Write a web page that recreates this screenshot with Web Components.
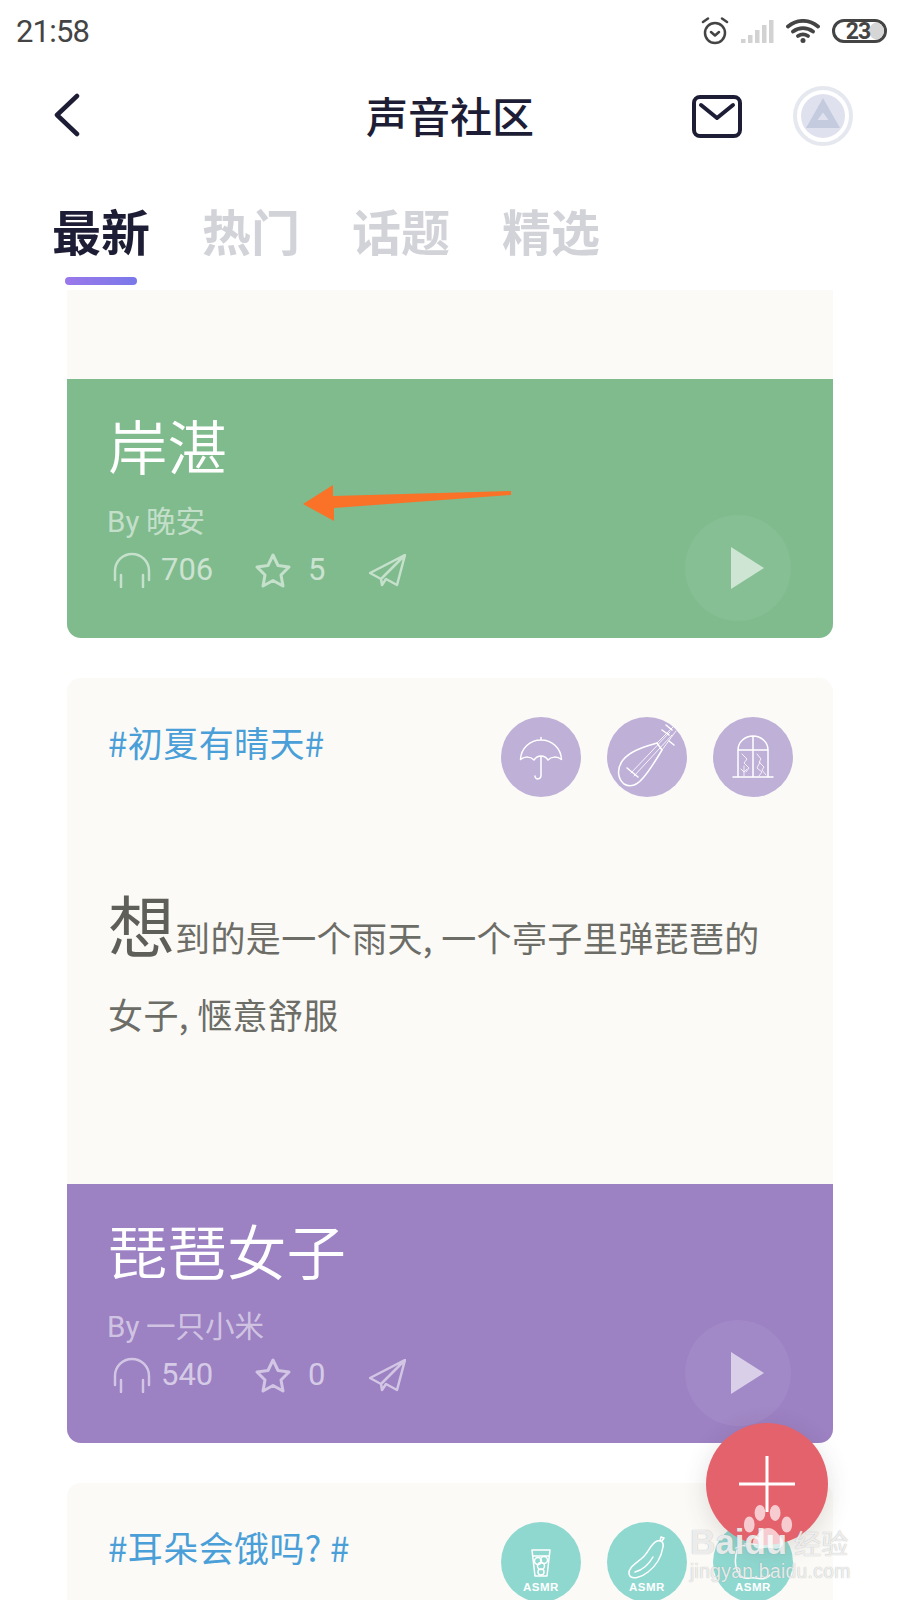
<!DOCTYPE html>
<html lang="zh">
<head>
<meta charset="utf-8">
<title>声音社区</title>
<style>
  html, body { margin: 0; padding: 0; background: #fff; }
  body { font-family: "Noto Sans CJK SC", "Noto Sans", sans-serif; }
  #page { position: relative; width: 900px; height: 1600px; overflow: hidden; }
</style>
</head>
<body>
<div id="page">
  <status-bar time="21:58" battery="23"></status-bar>
  <app-header title="声音社区"></app-header>
  <tab-bar tabs="最新,热门,话题,精选"></tab-bar>
  <card-list>
    <voice-card color="#7fbb8d" name="岸湛" by="晚安" listens="706" stars="5" style="--body-height: 89px"></voice-card>
    <voice-card color="#9c81c3" name="琵琶女子" by="一只小米" listens="540" stars="0" style="--body-height: 506px">
      <topic-head tag="#初夏有晴天#" color="#bfb0d8" icons="umbrella,pipa,window"></topic-head>
      <p-text first="想">到的是一个雨天, 一个亭子里弹琵琶的女子, 惬意舒服</p-text>
    </voice-card>
    <voice-card style="--body-height: 506px">
      <topic-head tag="#耳朵会饿吗? #" color="#8fd8d0" icons="glass,cucumber,ear"></topic-head>
    </voice-card>
  </card-list>
  <note-arrow></note-arrow>
  <add-button></add-button>
  <baidu-mark></baidu-mark>
</div>

<script>
const ASMR = `<text x="40" y="69" text-anchor="middle" font-family="Liberation Sans, sans-serif" font-size="11.500" font-weight="700" letter-spacing=".5" fill="#fff" stroke="none">ASMR</text>`;

const ICONS = {
  umbrella: `<path d="M19.500 42.500C20 31 29 23 40 23s20 8 20.500 19.500C56 39 50 39.500 47 43c-2-3-4.500-4-7-4s-5 1-7 4c-3-3.500-9-4-13.500-.5zM40 20.500V23M40 39v19c0 5-6 5-6 1"/>`,
  pipa: `<path d="M50 26C38 30 24 33 16 43 9 52 11 62 17 67c7 4 14 0 19-6 7-8 13-18 19-28zM20 51l11 9M55 13l7 5M59 8l6 5M62 24l5 4"/><path stroke-width="1" opacity=".85" d="M50 26 66 10M55 33 69 14M24 56 63 15M27 59 65 18"/>`,
  window: `<path d="M25 60V33C25 25 32 19 40 19s15 6 15 14v27M40 19V60M25 33H55M20 60H60"/><path stroke-width="1" opacity=".8" d="M29 37l5 5-3 4 5 5-3 4M31 49v10M28 52l3 3 3-3M44 37l4 5-2 3 5 5-2 3 4 5M47 45l-3 6 5 4-3 4"/>`,
  glass: `<path d="M31 28H49L46 54H34zM32 34H48"/><circle cx="37" cy="39" r="3.500"/><circle cx="43" cy="38" r="3.500"/><circle cx="40" cy="44" r="3.500"/><circle cx="40" cy="50" r="3"/>${ASMR}`,
  cucumber: `<path d="M22 52c-1-6 6-10 12-15 8-6 9-15 16-18 4-1 7 1 6 6-2 12-7 19-15 25-6 5-17 9-19 2zM53 19l1-4 3 1-2 3M28 50c8-2 14-8 18-15"/>${ASMR}`,
  ear: `<path d="M23 26c4-3 9-3 12-1M24 28c-3 10-2 22 5 27 5 3 9 0 13 1 5 1 11 2 15-3M32 22h12"/>${ASMR}`
};

class StatusBar extends HTMLElement {
  constructor() {
    super();
    this.attachShadow({ mode: 'open' });
  }
  connectedCallback() {
    this.shadowRoot.innerHTML = `
      <style>
        :host { display: flex; align-items: center; height: 62px; padding: 0 13px 0 16px; color: #444; }
        .time { font: 400 31px Roboto, sans-serif; letter-spacing: -.8px; }
        .icons { margin-left: auto; display: flex; align-items: center; gap: 12px; }
        svg { display: block; }
        .battery { position: relative; box-sizing: border-box; width: 55px; height: 24px; border: 3px solid #444; border-radius: 12px; display: flex; align-items: center; justify-content: center; overflow: hidden; }
        .battery i { position: absolute; right: 0; top: 0; bottom: 0; width: 15px; border-radius: 9px 0 0 9px; background: #d6d6d6; }
        .battery span { position: relative; font: 700 23px/1 Roboto, sans-serif; letter-spacing: -1px; color: #444; margin-left: -3px; }
      </style>
      <span class="time">${this.getAttribute('time')}</span>
      <div class="icons">
        <svg width="28" height="28" viewBox="0 0 28 28" fill="none" stroke="#444" stroke-width="2.500" stroke-linecap="round" stroke-linejoin="round">
          <circle cx="14" cy="16" r="10"/><path d="M10 15l4 3.500 4-3.500M2 5l5-3.500M26 5l-5-3.500"/>
        </svg>
        <svg width="33" height="24" viewBox="0 0 33 24" fill="#d2d2d2">
          <rect x="0" y="20" width="4.500" height="4"/><rect x="7" y="16" width="4.500" height="8"/><rect x="14" y="11" width="4.500" height="13"/><rect x="21" y="6" width="4.500" height="18"/><rect x="28" y="1" width="4.500" height="23"/>
        </svg>
        <svg width="34" height="24" viewBox="0 0 34 24" fill="none" stroke="#444" stroke-width="3.800" stroke-linecap="round">
          <path d="M2 7.500C11 0 23 0 32 7.500M7 12.500c6-4.500 14-4.500 20 0M12 17c3-2 7-2 10 0"/><circle cx="17" cy="21.500" r="2.500" fill="#444" stroke="none"/>
        </svg>
        <div class="battery"><i></i><span>${this.getAttribute('battery')}</span></div>
      </div>
    `;
  }
}

class AppHeader extends HTMLElement {
  constructor() {
    super();
    this.attachShadow({ mode: 'open' });
  }
  connectedCallback() {
    this.shadowRoot.innerHTML = `
      <style>
        :host { display: grid; grid-template-columns: 1fr auto 1fr; align-items: center; height: 108px; padding: 0 47px; color: #1d1d35; }
        h1 { margin: -3px 0 0; font: 500 42px/1 "Noto Sans CJK SC", sans-serif; }
        .back { margin: -2px 0 0 7px; }
        .right { display: flex; align-items: center; justify-content: flex-end; gap: 51px; }
        svg { display: block; }
      </style>
      <svg class="back" width="26" height="44" viewBox="0 0 26 44" fill="none" stroke="#1d1d35" stroke-width="4.500" stroke-linecap="round" stroke-linejoin="round">
        <path d="M23 3 3 22 23 41"/>
      </svg>
      <h1>${this.getAttribute('title')}</h1>
      <div class="right">
        <svg width="50" height="43" viewBox="0 0 50 43" fill="none" stroke="#1d1d35" stroke-width="4" stroke-linecap="round" stroke-linejoin="round">
          <rect x="2" y="2" width="46" height="39" rx="6"/><path d="M9 10l16 13 16-13"/>
        </svg>
        <svg width="60" height="60" viewBox="0 0 60 60">
          <circle cx="30" cy="30" r="28" fill="none" stroke="#e6e8f0" stroke-width="4"/>
          <circle cx="30" cy="30" r="22" fill="#dfe2ee"/>
          <path d="M30 12 47 42H13z" fill="#c5cbde"/><path d="M30 26.500 35.500 34H24.500z" fill="#dfe2ee"/>
        </svg>
      </div>
    `;
  }
}

class TabBar extends HTMLElement {
  constructor() {
    super();
    this.attachShadow({ mode: 'open' });
  }
  connectedCallback() {
    const tabs = this.getAttribute('tabs').split(',');
    this.shadowRoot.innerHTML = `
      <style>
        :host { display: flex; gap: 52px; height: 120px; box-sizing: border-box; padding: 30px 0 0 52px; }
        .tab { position: relative; font: 700 49px/60px "Noto Sans CJK SC", sans-serif; color: #d2d3d8; }
        .tab.on { color: #1d1d35; }
        .tab.on::after { content: ''; position: absolute; left: 13px; top: 77px; width: 72px; height: 8px; border-radius: 4px; background: linear-gradient(90deg, #9a78ea, #7a78ea); }
      </style>
      ${tabs.map((t, i) => `<div class="tab ${i === 0 ? 'on' : ''}">${t}</div>`).join('')}
    `;
  }
}

class CardList extends HTMLElement {
  constructor() {
    super();
    this.attachShadow({ mode: 'open' });
  }
  connectedCallback() {
    this.shadowRoot.innerHTML = `
      <style>
        :host { display: flex; flex-direction: column; gap: 40px; padding: 0 67px; }
      </style>
      <slot></slot>
    `;
  }
}

class VoiceCard extends HTMLElement {
  constructor() {
    super();
    this.attachShadow({ mode: 'open' });
  }
  connectedCallback() {
    const a = n => this.getAttribute(n);
    // the last card runs off the bottom of the screen, so no footer for it
    const foot = !a('name') ? '' : `
      <div class="foot">
        <div>
          <h2>${a('name')}</h2>
          <div class="by"><b>By</b> ${a('by')}</div>
          <div class="stats">
            <svg width="38" height="36" viewBox="0 0 38 36" fill="none" stroke="rgba(255,255,255,.55)" stroke-width="2.500" stroke-linecap="round">
              <path d="M2 28V19a17 17 0 0 1 34 0v9M8 23V35M30 23V35"/>
            </svg>
            <span class="n1">${a('listens')}</span>
            <svg class="star" width="38" height="36" viewBox="0 0 38 36" fill="none" stroke="rgba(255,255,255,.55)" stroke-width="3" stroke-linejoin="round">
              <path d="M19 3l5 10.500 11 1.500-8 8 2 11-10-5.500L9 34l2-11-8-8 11-1.500z"/>
            </svg>
            <span class="n2">${a('stars')}</span>
            <svg class="plane" width="37" height="33" viewBox="0 0 37 33" fill="none" stroke="rgba(255,255,255,.55)" stroke-width="2.500" stroke-linejoin="round" stroke-linecap="round">
              <path d="M36 1 1 19l11 6 1 6 4-6 11 6zM36 1 12 25"/>
            </svg>
          </div>
        </div>
        <div class="play">
          <svg width="33" height="42" viewBox="0 0 33 42"><path d="M0 0 33 21 0 42z" fill="rgba(255,255,255,.6)"/></svg>
        </div>
      </div>`;
    this.shadowRoot.innerHTML = `
      <style>
        :host { display: block; border-radius: 0 0 14px 14px; overflow: hidden; background: #fbfaf6; }
        :host(:not(:first-child)) { border-radius: 14px; }
        .body { box-sizing: border-box; height: var(--body-height, 89px); padding: 39px 40px 0 41px; }
        .foot { display: grid; grid-template-columns: 1fr 106px; height: 259px; box-sizing: border-box; padding: 33px 41px 0 41px; background: ${a('color')}; color: #fff; }
        h2 { margin: 0; font: 350 59.500px/64px "Noto Sans CJK SC", sans-serif; }
        .by { margin: 25px 0 0 -1px; font: 400 29.500px/36px "Noto Sans CJK SC", sans-serif; color: rgba(255,255,255,.55); }
        .by b { font: 400 29.500px/36px Roboto, sans-serif; }
        .stats { display: flex; align-items: center; height: 40px; margin-top: 10px; padding-left: 5px; font: 400 31px/40px Roboto, sans-serif; color: rgba(255,255,255,.6); }
        svg { display: block; flex: none; }
        .n1 { margin-left: 10px; width: 50px; }
        .star { margin-left: 43px; }
        .n2 { margin-left: 16px; width: 15px; }
        .plane { margin-left: 46px; }
        .play { align-self: start; margin-top: 103px; margin-left: -1px; width: 106px; height: 106px; border-radius: 50%; background: rgba(255,255,255,.06); display: flex; align-items: center; justify-content: center; }
        .play svg { margin-left: 18px; }
      </style>
      <div class="body"><slot></slot></div>
      ${foot}
    `;
  }
}

class TopicHead extends HTMLElement {
  constructor() {
    super();
    this.attachShadow({ mode: 'open' });
  }
  connectedCallback() {
    const color = this.getAttribute('color');
    const icons = this.getAttribute('icons').split(',');
    this.shadowRoot.innerHTML = `
      <style>
        :host { display: flex; align-items: flex-start; }
        .tag { font: 400 35px/50px "Noto Sans CJK SC", sans-serif; letter-spacing: .4px; color: #4a9fd8; white-space: pre; }
        .icons { margin-left: auto; display: flex; gap: 26px; }
        svg { display: block; }
      </style>
      <div class="tag">${this.getAttribute('tag')}</div>
      <div class="icons">
        ${icons.map(n => `<svg width="80" height="80" viewBox="0 0 80 80" fill="none" stroke="#fff" stroke-width="1.500" stroke-linecap="round" stroke-linejoin="round"><circle cx="40" cy="40" r="40" fill="${color}" stroke="none"/>${ICONS[n]}</svg>`).join('')}
      </div>
    `;
  }
}

class PText extends HTMLElement {
  constructor() {
    super();
    this.attachShadow({ mode: 'open' });
  }
  connectedCallback() {
    this.shadowRoot.innerHTML = `
      <style>
        :host { display: block; margin-top: 101px; font: 400 35px/77px "Noto Sans CJK SC", sans-serif; letter-spacing: .4px; color: #6d6d68; width: 670px; }
        b { font-weight: 400; font-size: 67px; line-height: 0; letter-spacing: 0; color: #5f5f5a; }
      </style>
      <b>${this.getAttribute('first')}</b><slot></slot>
    `;
  }
}

class NoteArrow extends HTMLElement {
  constructor() {
    super();
    this.attachShadow({ mode: 'open' });
  }
  connectedCallback() {
    this.shadowRoot.innerHTML = `
      <style>
        :host { position: absolute; left: 299px; top: 479px; width: 220px; height: 48px; }
        svg { display: block; }
      </style>
      <svg width="220" height="48" viewBox="0 0 220 48"><path d="M4 25 34 6 34 17 212 12V16L35 29 35 42z" fill="#f97228"/></svg>
    `;
  }
}

class AddButton extends HTMLElement {
  constructor() {
    super();
    this.attachShadow({ mode: 'open' });
  }
  connectedCallback() {
    this.shadowRoot.innerHTML = `
      <style>
        :host { position: absolute; left: 706px; top: 1423px; width: 122px; height: 122px; border-radius: 50%; background: #e4626c; box-shadow: 0 6px 24px rgba(80,60,60,.16); display: flex; align-items: center; justify-content: center; }
        svg { display: block; }
      </style>
      <svg width="56" height="56" viewBox="0 0 56 56" stroke="#fff" stroke-width="3"><path d="M28 0V56M0 28H56"/></svg>
    `;
  }
}

class BaiduMark extends HTMLElement {
  constructor() {
    super();
    this.attachShadow({ mode: 'open' });
  }
  connectedCallback() {
    this.shadowRoot.innerHTML = `
      <style>
        :host { position: absolute; left: 690px; top: 1502px; width: 170px; height: 84px; color: rgba(255,255,255,.78); text-shadow: 0 0 1px rgba(140,140,140,.75); }
        svg { position: absolute; left: 53px; top: 2px; }
        .brand { position: absolute; left: 0; top: 22px; white-space: nowrap; font: 700 35px/36px "Liberation Sans", sans-serif; }
        .brand span { font: 400 27px/36px "Noto Sans CJK SC", sans-serif; margin-left: 7px; }
        .site { position: absolute; left: 0; top: 58px; white-space: nowrap; font: 400 19.300px/24px "Liberation Sans", sans-serif; letter-spacing: .3px; }
      </style>
      <div class="brand">Baidu<span>经验</span></div>
      <svg width="50" height="50" viewBox="0 0 56 54" fill="rgba(255,255,255,.68)">
        <ellipse cx="7" cy="22" rx="6" ry="9"/><ellipse cx="19" cy="9" rx="6" ry="9"/><ellipse cx="36" cy="9" rx="6" ry="9"/><ellipse cx="49" cy="22" rx="6" ry="9"/>
        <path d="M28 26c8 0 11 7 15 11 5 6 0 13-7 12-3 0-5-1-8-1s-5 1-8 1c-7 1-12-6-7-12 4-4 7-11 15-11z"/>
      </svg>
      <div class="site">jingyan.baidu.com</div>
    `;
  }
}

customElements.define('status-bar', StatusBar);
customElements.define('app-header', AppHeader);
customElements.define('tab-bar', TabBar);
customElements.define('card-list', CardList);
customElements.define('voice-card', VoiceCard);
customElements.define('topic-head', TopicHead);
customElements.define('p-text', PText);
customElements.define('note-arrow', NoteArrow);
customElements.define('add-button', AddButton);
customElements.define('baidu-mark', BaiduMark);
</script>
</body>
</html>
